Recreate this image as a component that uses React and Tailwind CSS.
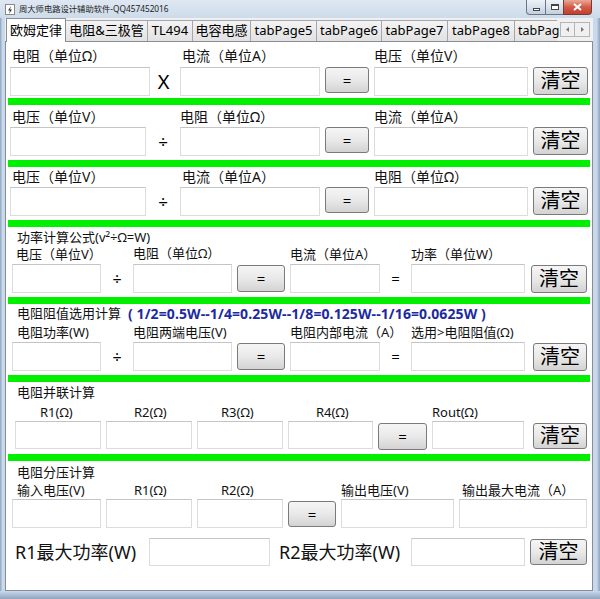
import React from "react";

const font = "font-['Noto_Sans','Noto_Sans_CJK_SC',sans-serif]";

const Field = ({ className }) => (
  <div className={`shrink-0 bg-white border border-[#dcdcdc] border-t-[#c4c4c4] ${className}`}></div>
);

const Btn = ({ className, children }) => (
  <div
    className={`shrink-0 flex items-center justify-center rounded-[3px] border border-[#7a7a7a] bg-linear-to-b from-[#f5f5f5] via-[#e9e9e9] to-[#d3d3d3] text-black ${className}`}
  >
    {children}
  </div>
);

const Eq = ({ className }) => (
  <Btn className={`text-[15px] leading-none ${className}`}>=</Btn>
);

const Clear = ({ className }) => (
  <Btn className={`text-[20px] leading-none ${className}`}>清空</Btn>
);

const Op = ({ className, children }) => (
  <div className={`shrink-0 flex items-center justify-center text-black ${className}`}>{children}</div>
);

const Bar = ({ className }) => (
  <div className={`mx-[2px] h-[7px] bg-[#00f000] ${className}`}></div>
);

const tabs = [
  { name: "电阻&三极管", w: "w-[82px]" },
  { name: "TL494", w: "w-[45px]" },
  { name: "电容电感", w: "w-[58px]" },
  { name: "tabPage5", w: "w-[66px]" },
  { name: "tabPage6", w: "w-[65px]" },
  { name: "tabPage7", w: "w-[66px]" },
  { name: "tabPage8", w: "w-[67px]" },
];

const TitleBar = () => (
  <div className="h-[18px] flex items-start bg-linear-to-b from-[#dfe8f2] to-[#cddbea] shrink-0">
    <div className="ml-[5px] mt-[4px] w-[10px] h-[11px] bg-white border border-[#8a8a8a] flex items-center justify-center">
      <svg width="6" height="8" viewBox="0 0 6 8">
        <path d="M4 0 L1 4.5 L3 4.5 L2 8 L5 3.5 L3 3.5 Z" fill="#333" />
      </svg>
    </div>
    <span className="ml-[4px] mt-[3px] text-[8.3px] leading-[12px] text-[#222] whitespace-nowrap">周大师电路设计辅助软件-QQ457452016</span>
    <div className="ml-auto mr-[8px] flex">
      <div className="w-[20px] h-[15px] rounded-bl-[4px] border border-[#6a7688] border-t-0 bg-linear-to-b from-[#eef3f9] to-[#c3d0df] flex items-end justify-center pb-[3px]">
        <div className="w-[7px] h-[3px] bg-white border border-[#444]"></div>
      </div>
      <div className="w-[17px] h-[15px] border-b border-[#6a7688] bg-linear-to-b from-[#eef3f9] to-[#c3d0df] flex items-center justify-center">
        <div className="w-[8px] h-[6px] border border-[#444] border-t-2 bg-white"></div>
      </div>
      <div className="w-[29px] h-[15px] rounded-br-[4px] border border-[#7a3a30] border-t-0 bg-linear-to-b from-[#e9a898] via-[#d45a48] to-[#c0402e] flex items-center justify-center">
        <svg width="9" height="8" viewBox="0 0 9 8">
          <path d="M1 1 L8 7 M8 1 L1 7" stroke="#fff" strokeWidth="2" />
        </svg>
      </div>
    </div>
  </div>
);

const TabStrip = () => (
  <div className="h-[23px] flex items-end shrink-0">
    <div className="ml-[1px] w-[60px] h-[24px] -mb-px relative z-10 bg-white border border-[#898c95] border-b-0 flex items-center justify-center text-[13px] text-black">
      欧姆定律
    </div>
    {tabs.map((t) => (
      <div
        key={t.name}
        className={`${t.w} h-[21px] shrink-0 bg-linear-to-b from-[#f3f3f3] to-[#e2e2e2] border border-[#a3a6ad] border-l-0 border-b-0 flex items-center justify-center text-[13px] text-black whitespace-nowrap`}
      >
        {t.name}
      </div>
    ))}
    <div className="w-[42px] h-[21px] shrink-0 bg-linear-to-b from-[#f3f3f3] to-[#e2e2e2] border-t border-[#a3a6ad] pl-[3px] flex items-center text-[12.5px] text-black whitespace-nowrap">
      tabPag
    </div>
    <div className="self-start mt-[4px] ml-[3px] flex">
      <div className="w-[15px] h-[15px] bg-[#f0f0f0] border border-[#b5b5b5] flex items-center justify-center">
        <svg width="3" height="5" viewBox="0 0 3 5"><path d="M3 0 L0 2.5 L3 5 Z" fill="#777" /></svg>
      </div>
      <div className="w-[15px] h-[15px] bg-[#f0f0f0] border border-[#b5b5b5] border-l-0 flex items-center justify-center">
        <svg width="3" height="5" viewBox="0 0 3 5"><path d="M0 0 L3 2.5 L0 5 Z" fill="#777" /></svg>
      </div>
    </div>
  </div>
);

const Panel = () => (
  <div className="flex-1 bg-white border border-[#898c95] flex flex-col text-[#111]">
    {/* 欧姆定律 1 */}
    <div className="mt-[4px] h-[20px] flex text-[14px] leading-[20px]">
      <span className="ml-[6px] w-[170px] shrink-0">电阻（单位Ω）</span>
      <span className="w-[192px] shrink-0">电流（单位A）</span>
      <span>电压（单位V）</span>
    </div>
    <div className="mt-[1px] flex items-start">
      <Field className="ml-[4px] w-[140px] h-[29px]" />
      <Op className="w-[30px] h-[29px] text-[20px] pr-[3px]">X</Op>
      <Field className="w-[140px] h-[29px]" />
      <Eq className="ml-[5px] w-[44px] h-[26px]" />
      <Field className="ml-[5px] w-[154px] h-[29px]" />
      <Clear className="ml-[5px] w-[55px] h-[28px]" />
    </div>
    <Bar className="mt-[2px]" />

    {/* 2 */}
    <div className="mt-[1px] h-[21px] flex text-[14px] leading-[21px]">
      <span className="ml-[6px] w-[168px] shrink-0">电压（单位V）</span>
      <span className="w-[194px] shrink-0">电阻（单位Ω）</span>
      <span>电流（单位A）</span>
    </div>
    <div className="flex items-start">
      <Field className="ml-[4px] w-[136px] h-[29px]" />
      <Op className="w-[34px] h-[29px] text-[17px]">÷</Op>
      <Field className="w-[140px] h-[29px]" />
      <Eq className="ml-[5px] w-[44px] h-[26px]" />
      <Field className="ml-[5px] w-[154px] h-[29px]" />
      <Clear className="ml-[5px] w-[55px] h-[28px]" />
    </div>
    <Bar className="mt-[4px]" />

    {/* 3 */}
    <div className="h-[20px] flex text-[14px] leading-[20px]">
      <span className="ml-[6px] w-[170px] shrink-0">电压（单位V）</span>
      <span className="w-[192px] shrink-0">电流（单位A）</span>
      <span>电阻（单位Ω）</span>
    </div>
    <div className="flex items-start">
      <Field className="ml-[4px] w-[136px] h-[29px]" />
      <Op className="w-[34px] h-[29px] text-[17px]">÷</Op>
      <Field className="w-[140px] h-[29px]" />
      <Eq className="ml-[5px] w-[44px] h-[26px]" />
      <Field className="ml-[5px] w-[154px] h-[29px]" />
      <Clear className="ml-[5px] w-[55px] h-[28px]" />
    </div>
    <Bar className="mt-[4px]" />

    {/* 功率 */}
    <div className="mt-[2px] h-[17px] text-[13px] leading-[17px]">
      <span className="ml-[11px]">功率计算公式(v²÷Ω=W)</span>
    </div>
    <div className="h-[17px] flex items-start text-[13px] leading-[17px]">
      <span className="ml-[10px] w-[117px] shrink-0">电压（单位V）</span>
      <span className="w-[157px] shrink-0 leading-[15px]">电阻（单位Ω）</span>
      <span className="w-[121px] shrink-0">电流（单位A）</span>
      <span>功率（单位W）</span>
    </div>
    <div className="mt-[1px] flex items-start">
      <Field className="ml-[6px] w-[89px] h-[29px]" />
      <Op className="w-[32px] h-[29px] text-[16px]">÷</Op>
      <Field className="w-[99px] h-[29px]" />
      <Eq className="ml-[5px] mt-[1px] w-[48px] h-[27px]" />
      <Field className="ml-[5px] w-[90px] h-[29px]" />
      <Op className="w-[31px] h-[29px] text-[15px]">=</Op>
      <Field className="w-[114px] h-[29px]" />
      <Clear className="ml-[6px] mt-[1px] w-[56px] h-[28px]" />
    </div>
    <Bar className="mt-[4px]" />

    {/* 电阻阻值选用 */}
    <div className="h-[19px] flex text-[13px] leading-[19px]">
      <span className="ml-[11px] w-[111px] shrink-0">电阻阻值选用计算</span>
      <span className="font-bold text-[14px] tracking-[0.1px] text-[#1c2aa2] whitespace-nowrap">( 1/2=0.5W--1/4=0.25W--1/8=0.125W--1/16=0.0625W )</span>
    </div>
    <div className="h-[18px] flex text-[13px] leading-[18px]">
      <span className="ml-[11px] w-[116px] shrink-0">电阻功率(W)</span>
      <span className="w-[157px] shrink-0">电阻两端电压(V)</span>
      <span className="w-[121px] shrink-0">电阻内部电流（A）</span>
      <span>选用&gt;电阻阻值(Ω)</span>
    </div>
    <div className="mt-[1px] flex items-start">
      <Field className="ml-[6px] w-[89px] h-[29px]" />
      <Op className="w-[32px] h-[29px] text-[16px]">÷</Op>
      <Field className="w-[99px] h-[29px]" />
      <Eq className="ml-[5px] mt-[1px] w-[48px] h-[27px]" />
      <Field className="ml-[5px] w-[90px] h-[29px]" />
      <Op className="w-[31px] h-[29px] text-[15px]">=</Op>
      <Field className="w-[114px] h-[29px]" />
      <Clear className="ml-[8px] mt-[1px] w-[54px] h-[28px]" />
    </div>
    <Bar className="mt-[4px]" />

    {/* 并联 */}
    <div className="mt-[1px] h-[18px] text-[13px] leading-[18px]">
      <span className="ml-[11px]">电阻并联计算</span>
    </div>
    <div className="h-[20px] flex text-[13px] leading-[22px]">
      <span className="ml-[34px] w-[94px] shrink-0">R1(Ω)</span>
      <span className="w-[87px] shrink-0">R2(Ω)</span>
      <span className="w-[95px] shrink-0">R3(Ω)</span>
      <span className="w-[116px] shrink-0">R4(Ω)</span>
      <span>Rout(Ω)</span>
    </div>
    <div className="flex items-start">
      <Field className="ml-[9px] w-[86px] h-[28px]" />
      <Field className="ml-[5px] w-[86px] h-[28px]" />
      <Field className="ml-[5px] w-[86px] h-[28px]" />
      <Field className="ml-[5px] w-[85px] h-[28px]" />
      <Eq className="ml-[5px] mt-[2px] w-[49px] h-[27px]" />
      <Field className="ml-[5px] w-[92px] h-[28px]" />
      <Clear className="ml-[9px] mt-[2px] w-[54px] h-[26px]" />
    </div>
    <Bar className="mt-[4px]" />

    {/* 分压 */}
    <div className="mt-[1px] h-[21px] text-[13px] leading-[21px]">
      <span className="ml-[11px]">电阻分压计算</span>
    </div>
    <div className="h-[15px] flex text-[13px] leading-[15px]">
      <span className="ml-[11px] w-[117px] shrink-0">输入电压(V)</span>
      <span className="w-[87px] shrink-0">R1(Ω)</span>
      <span className="w-[120px] shrink-0">R2(Ω)</span>
      <span className="w-[121px] shrink-0">输出电压(V)</span>
      <span>输出最大电流（A）</span>
    </div>
    <div className="mt-[1px] flex items-start">
      <Field className="ml-[6px] w-[89px] h-[29px]" />
      <Field className="ml-[5px] w-[86px] h-[29px]" />
      <Field className="ml-[5px] w-[86px] h-[29px]" />
      <Eq className="ml-[5px] mt-[2px] w-[48px] h-[26px]" />
      <Field className="ml-[5px] w-[113px] h-[29px]" />
      <Field className="ml-[5px] w-[128px] h-[29px]" />
    </div>
    <div className="mt-[10px] h-[28px] flex items-center">
      <span className="ml-[9px] w-[134px] shrink-0 text-[18px] leading-[28px] whitespace-nowrap">R1最大功率(W)</span>
      <Field className="w-[121px] h-[28px]" />
      <span className="ml-[9px] w-[132px] shrink-0 text-[18px] leading-[28px] whitespace-nowrap">R2最大功率(W)</span>
      <Field className="w-[114px] h-[28px]" />
      <Clear className="ml-[5px] w-[57px] h-[26px]" />
    </div>
  </div>
);

export default function App() {
  return (
    <div className={`w-[600px] h-[599px] overflow-hidden flex flex-col bg-[#c8d8ec] ${font}`}>
      <TitleBar />
      <div className="flex-1 flex min-h-0">
        <div className="w-[5px] shrink-0 bg-linear-to-r from-[#8ea3bd] via-[#c9d9ec] to-[#c9d9ec]"></div>
        <div className="flex-1 flex flex-col bg-[#f0f0f0]">
          <TabStrip />
          <Panel />
        </div>
        <div className="w-[7px] shrink-0 bg-linear-to-r from-[#c9d9ec] via-[#c9d9ec] to-[#8ea3bd]"></div>
      </div>
      <div className="h-[8px] shrink-0 bg-linear-to-b from-[#c9d9ec] to-[#8ea3bd]"></div>
    </div>
  );
}
